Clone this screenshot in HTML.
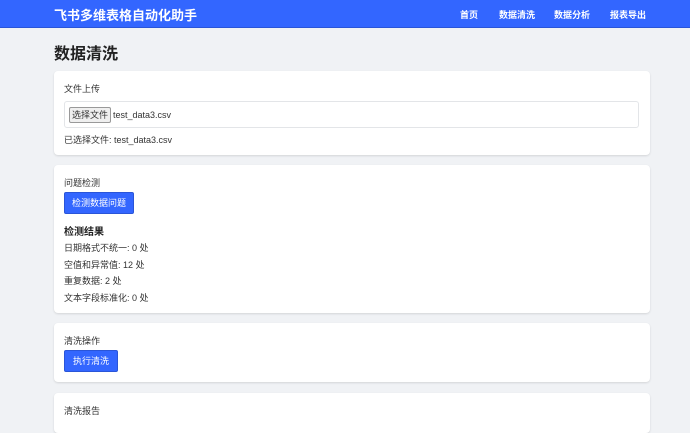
<!DOCTYPE html>
<html><head><meta charset="utf-8"><style>
*{margin:0;padding:0;box-sizing:border-box}
body{width:690px;height:415px;overflow:hidden;background:#f0f2f5;font-family:"Liberation Sans","Noto Sans CJK SC",sans-serif;color:#333;position:relative}
.nav{position:absolute;left:0;top:0;width:690px;height:28px;background:#3366ff;border-bottom:1px solid #2a55d8}
.nav .t{position:absolute;left:54px;top:5px;color:#fff;font-size:13px;font-weight:bold}
.nav a{position:absolute;top:8px;color:#fff;font-size:9px;font-weight:bold}
h1{position:absolute;left:54px;top:40px;font-size:16px;font-weight:bold;color:#222}
.card{position:absolute;left:54px;width:596px;background:#fff;border-radius:4px;box-shadow:0 1px 2px rgba(0,0,0,.12)}
.s{position:absolute;font-size:9px;color:#333;white-space:nowrap}
.btn{position:absolute;background:#3366ff;color:#fff;font-size:9px;border-radius:2px;border:1px solid #2a55d8;text-align:center}
</style></head><body>
<div class="nav"><div class="t">飞书多维表格自动化助手</div>
<a style="left:460px">首页</a><a style="left:499px">数据清洗</a><a style="left:554px">数据分析</a><a style="left:610px">报表导出</a></div>
<h1>数据清洗</h1>
<div class="card" style="top:71px;height:84px">
<div class="s" style="left:10px;top:11px">文件上传</div>
<div style="position:absolute;left:10px;top:30px;width:575px;height:27px;border:1px solid #e3e5e8;border-radius:3px"></div>
<div style="position:absolute;left:15px;top:36px;width:42px;height:16px;background:#efefef;border:1px solid #999;border-radius:2px;font-size:9px;text-align:center;line-height:14px">选择文件</div>
<div class="s" style="left:59px;top:39px">test_data3.csv</div>
<div class="s" style="left:10px;top:62px">已选择文件: test_data3.csv</div>
</div>
<div class="card" style="top:165px;height:148px">
<div class="s" style="left:10px;top:11px">问题检测</div>
<div class="btn" style="left:10px;top:27px;width:70px;height:22px;line-height:20px">检测数据问题</div>
<div class="s" style="left:10px;top:58px;font-size:10px;font-weight:bold;color:#222">检测结果</div>
<div class="s" style="left:10px;top:76px">日期格式不统一: 0 处</div>
<div class="s" style="left:10px;top:93px">空值和异常值: 12 处</div>
<div class="s" style="left:10px;top:109px">重复数据: 2 处</div>
<div class="s" style="left:10px;top:126px">文本字段标准化: 0 处</div>
</div>
<div class="card" style="top:323px;height:59px">
<div class="s" style="left:10px;top:11px">清洗操作</div>
<div class="btn" style="left:10px;top:27px;width:54px;height:22px;line-height:20px">执行清洗</div>
</div>
<div class="card" style="top:393px;height:40px">
<div class="s" style="left:10px;top:11px">清洗报告</div>
</div>
</body></html>
